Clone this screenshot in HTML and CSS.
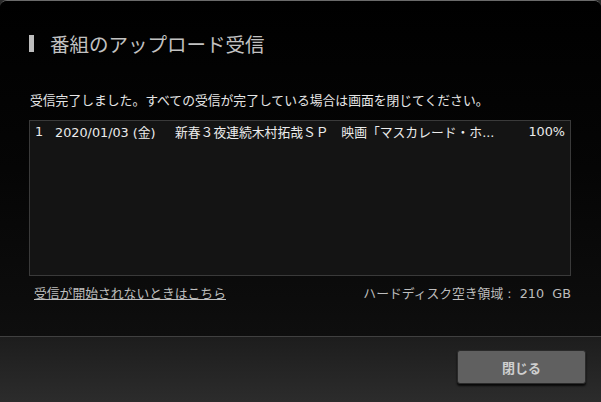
FILE: index.html
```html
<!DOCTYPE html>
<html lang="ja">
<head>
    <meta charset="UTF-8">
    <title>番組のアップロード受信</title>
    <link rel="stylesheet" href="styles.css">
</head>
<body>
    <div class="dialog">
        <!-- Main content area -->
        <div class="content">
            <h1 class="title"><span class="title-bar"></span>番組のアップロード受信</h1>
            <p class="message">受信完了しました。すべての受信が完了している場合は画面を閉じてください。</p>
            <div class="list">
                <div class="list-row">
                    <span class="col-no">1</span>
                    <span class="col-date">2020/01/03 (金)</span>
                    <span class="col-name">新春３夜連続木村拓哉ＳＰ　映画「マスカレード・ホ...</span>
                    <span class="col-progress">100%</span>
                </div>
            </div>
            <div class="info-row">
                <a class="help-link" href="#">受信が開始されないときはこちら</a>
                <span class="disk">ハードディスク空き領域&nbsp;:&nbsp; 210&nbsp; GB</span>
            </div>
        </div>
        <!-- Footer with close button -->
        <div class="footer">
            <button type="button" class="close-btn">閉じる</button>
        </div>
    </div>
</body>
</html>
```

FILE: styles.css
```css
/* Page fills the window with the dialog */
body, html {
    margin: 0;
    height: 100%;
    background: #2a2a2a;
    font-family: "Noto Sans CJK JP", "Noto Sans", sans-serif;
}
.dialog {
    width: 601px;
    height: 402px;
    box-sizing: border-box;
    display: flex;
    flex-direction: column;
    border-top: 1px solid #6a6a6a;
    border-radius: 7px 7px 0 0;
    overflow: hidden;
    background: #000;
}
/* Upper area, dark gradient */
.content {
    flex: 1;
    padding: 0 30px 0 29px;
    background: linear-gradient(#000 0%, #050505 50%, #0e0e0e 100%);
}
.title {
    display: flex;
    align-items: center;
    gap: 16px;
    margin: 32px 0 0;
    height: 21px;
    font-size: 19.5px;
    font-weight: normal;
    color: #c2c2c2;
}
.title-bar {
    width: 5px;
    height: 17px;
    background: #bdbdbd;
}
.message {
    margin: 37px 0 0 1px;
    font-size: 12.8px;
    line-height: 18px;
    color: #e6e6e6;
}
/* Program list box */
.list {
    margin-top: 11px;
    height: 154px;
    border: 1px solid #3a3a3a;
    background: #141414;
}
.list-row {
    display: flex;
    align-items: center;
    height: 20px;
    font-family: "DejaVu Sans", "Noto Sans CJK JP", sans-serif;
    font-size: 12.8px;
    color: #ececec;
}
.col-no {
    margin-left: 5px;
    width: 20px;
}
.col-date {
    width: 120px;
}
.col-name {
    flex: 1;
}
.col-progress {
    margin-right: 5px;
}
.info-row {
    display: flex;
    justify-content: space-between;
    align-items: center;
    margin-top: 6px;
    padding-left: 5px;
    height: 20px;
    font-family: "DejaVu Sans", "Noto Sans CJK JP", sans-serif;
    font-size: 12.8px;
    color: #bdbdbd;
}
.help-link {
    color: #bdbdbd;
    text-decoration: underline;
}
/* Footer bar */
.footer {
    height: 66px;
    border-top: 1px solid #404040;
    background: linear-gradient(#1d1d1d, #2c2c2c);
    display: flex;
    justify-content: flex-end;
    align-items: flex-start;
    padding: 13px 15px 0 0;
    box-sizing: border-box;
}
.close-btn {
    width: 129px;
    height: 34px;
    background: #606060;
    border: 1px solid #2a2a2a;
    border-radius: 3px;
    box-shadow: 0 2px 2px rgba(0,0,0,0.8);
    color: #cfcfcf;
    font-family: inherit;
    font-size: 13px;
    font-weight: bold;
    cursor: pointer;
}
```
